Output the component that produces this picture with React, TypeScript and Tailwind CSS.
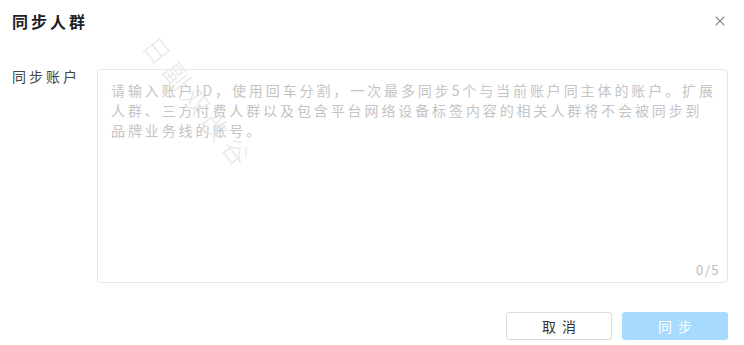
import { X } from 'lucide-react';

const font = { fontFamily: '"Noto Sans CJK SC", "Noto Sans", sans-serif' };

const lines = [
  '请输入账户ID，使用回车分割，一次最多同步5个与当前账户同主体的账户。扩展',
  '人群、三方付费人群以及包含平台网络设备标签内容的相关人群将不会被同步到',
  '品牌业务线的账号。',
];

export default function App() {
  return (
    <div className="relative w-[744px] h-[345px] bg-white overflow-hidden text-[#333]" style={font}>
      {/* Header */}
      <div className="flex items-center justify-between pl-3 pr-4 pt-[8px] h-[34px]">
        <h2 className="text-[16px] font-bold tracking-[3px] text-[#222]">同步人群</h2>
        <X size={16} strokeWidth={1.6} className="text-[#888]" />
      </div>

      {/* Form row */}
      <div className="flex pl-3 pr-4 mt-[35px]">
        <label className="w-[85px] text-[14px] tracking-[3px] leading-[14px] text-[#444]">同步账户</label>
        <div className="relative w-[631px] h-[214px] border border-[#e8e8e8] rounded-[3px] px-[13px] py-[10px]">
          <div className="text-[14px] leading-[20px] tracking-[2.9px] text-[#c4c4c4]">
            {lines.map((l) => (
              <p key={l} className="whitespace-nowrap">{l}</p>
            ))}
          </div>
          <span className="absolute right-[7px] bottom-[3px] text-[13px] tracking-[1.5px] text-[#bbb]">0/5</span>
        </div>
      </div>

      {/* Footer */}
      <div className="flex justify-end gap-[10px] pr-4 mt-[29px]">
        <button className="w-[106px] h-[28px] border border-[#dcdcdc] rounded-[3px] text-[14px] tracking-[6px] pl-[6px] text-[#333]">取消</button>
        <button className="w-[106px] h-[28px] rounded-[3px] bg-[#a6dafe] text-[14px] tracking-[6px] pl-[6px] text-white">同步</button>
      </div>

      {/* Watermark */}
      <div className="absolute left-[150px] top-[20px] rotate-[52deg] origin-left text-[26px] font-light tracking-[6px] text-[#e8e8e8] pointer-events-none select-none">
        日副双改谷
      </div>
    </div>
  );
}
